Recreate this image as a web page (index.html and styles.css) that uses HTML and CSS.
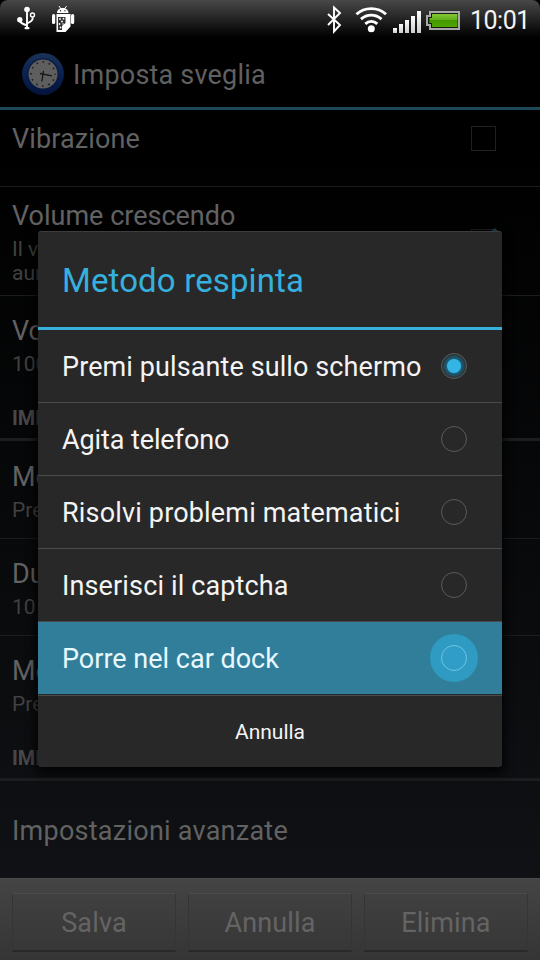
FILE: index.html
```html
<!DOCTYPE html>
<html lang="it">
<head>
<meta charset="utf-8">
<title>Imposta sveglia</title>
<link rel="stylesheet" href="styles.css">
</head>
<body>
<div class="screen">
  <header class="status">
    <svg class="status-left" width="90" height="38" viewBox="0 0 90 38">
      <g fill="none" stroke="#fff" stroke-width="1.900"><path d="M27 28V9M27 25.500c-5-2-7.500-3-7.500-6M27 23.500c4-2 5.800-3 5.800-6"/><circle cx="32.500" cy="15" r="2" stroke-width="1.400"/></g>
      <g fill="#fff"><circle cx="27" cy="9.500" r="2.800"/><circle cx="19.800" cy="19.800" r="2.700"/><rect x="24.500" y="27" width="5" height="2.200" rx="1"/></g>
      <g fill="#fff"><path d="M57 13c0-3.500 3-5 5.700-5s5.800 1.500 5.800 5zM56.500 14h14v12.500l-5 5.500h-9z"/><rect x="52" y="14" width="3.200" height="10" rx="1.500"/><rect x="71" y="14" width="3.200" height="10" rx="1.500"/></g>
      <path d="M59 6l2 3M66.500 6l-2 3" stroke="#fff"/>
      <path d="M58 17h7.500v6l-3.500 3v4h-4z" fill="#333"/>
      <g fill="#fff"><circle cx="60" cy="19" r=".9"/><circle cx="63.500" cy="18.700" r=".9"/><circle cx="62" cy="21.500" r=".9"/><circle cx="59.500" cy="24" r=".9"/><circle cx="63" cy="24" r=".8"/><circle cx="60.500" cy="27.500" r=".9"/></g>
      <circle cx="60.500" cy="10.800" r=".7" fill="#222"/><circle cx="65" cy="10.800" r=".7" fill="#222"/>
    </svg>
    <svg class="status-right" width="140" height="38" viewBox="322 0 140 38">
      <defs><linearGradient id="gr" x2="0" y2="1"><stop stop-color="#84c832"/><stop offset=".45" stop-color="#62b01c"/><stop offset=".5" stop-color="#439900"/><stop offset="1" stop-color="#4fa600"/></linearGradient>
      <linearGradient id="bar" x2="0" y2="1"><stop stop-color="#fff"/><stop offset="1" stop-color="#ccc"/></linearGradient></defs>
      <path d="M328 14l12 11-6 6.500V7.500l6 5.500-12 12" fill="none" stroke="#fff" stroke-width="1.900"/>
      <g fill="none" stroke="#fff" stroke-width="2.900"><path d="M356.500 14.200c8-7.500 21.500-7.500 29.500 0M361 19.200c6-5.400 14.500-5.400 20.500 0M365.300 23.800c3.600-3.200 8.400-3.200 12 0"/></g>
      <circle cx="371.300" cy="28.700" r="3.500" fill="#fff"/>
      <g fill="url(#bar)"><rect x="393" y="28" width="4" height="5"/><rect x="399" y="24" width="4" height="9"/><rect x="405" y="20" width="4" height="13"/><rect x="411" y="16" width="4" height="17"/><rect x="417" y="11" width="4" height="22"/></g>
      <path d="M430 12h29v17h-29v-4h-3v-9h3z" fill="#171c10" stroke="#a8a8a8" stroke-width="2"/>
      <path d="M432 14h25.500v13H432v-4h-2.500v-5h2.500z" fill="url(#gr)"/>
    </svg>
    <span class="clock">10:01</span>
  </header>
  <div class="bar">
    <svg width="46" height="46" viewBox="0 0 46 46">
      <defs><linearGradient id="blue" x2="0" y2="1"><stop stop-color="#1b3257"/><stop offset=".5" stop-color="#0b2150"/><stop offset="1" stop-color="#03133d"/></linearGradient></defs>
      <circle cx="23" cy="23" r="21" fill="url(#blue)"/><circle cx="23" cy="23" r="15.800" fill="#081a42"/><circle cx="23" cy="23" r="14.500" fill="#5e5e5e"/>
      <circle cx="23" cy="23" r="12" fill="none" stroke="#1c1c1c" stroke-width="1.600" stroke-dasharray="1.600 4.683" stroke-dashoffset=".8"/>
      <path d="M20 22.500l12 2.300M23.500 20l-1.700 10.500" stroke="#151515" stroke-width="1.300"/>
    </svg>
    <h1>Imposta sveglia</h1>
  </div>
  <main class="list">
    <div class="row vib"><div class="name t1">Vibrazione</div><i class="check"></i></div>
    <div class="row vol"><div><div class="name t2">Volume crescendo</div><div class="sub">Il v<br>aum</div></div><i class="check on"><svg width="14" height="14" viewBox="0 0 14 14"><path d="M1 8l7-5 5 5-6 6z" fill="#1d4656"/></svg></i></div>
    <div class="row first last"><div><div class="name">Vol</div><div class="sub">100</div></div></div>
    <div class="section">IMP</div>
    <div class="row method"><div><div class="name">Met</div><div class="sub">Pre</div></div></div>
    <div class="row after"><div><div class="name">Dur</div><div class="sub">10</div></div></div>
    <div class="row after last"><div><div class="name">Met</div><div class="sub">Pre</div></div></div>
    <div class="section">IMP</div>
    <div class="row adv"><div class="name t3">Impostazioni avanzate</div></div>
  </main>
  <footer class="foot">
    <div class="btn">Salva</div><div class="btn">Annulla</div><div class="btn">Elimina</div>
  </footer>
  <section class="dialog">
    <h2>Metodo respinta</h2>
    <div class="opt"><span class="o1">Premi pulsante sullo schermo</span><i class="radio sel"></i></div>
    <div class="opt"><span class="o2">Agita telefono</span><i class="radio"></i></div>
    <div class="opt"><span class="o3">Risolvi problemi matematici</span><i class="radio"></i></div>
    <div class="opt"><span class="o4">Inserisci il captcha</span><i class="radio"></i></div>
    <div class="opt pressed"><span class="o5">Porre nel car dock</span><i class="radio"></i></div>
    <div class="cancel">Annulla</div>
  </section>
</div>
</body>
</html>
```
FILE: styles.css
```css
* { box-sizing: border-box; }
body { margin: 0; background: #000; font-family: Roboto, "Liberation Sans", sans-serif; }
.screen { position: relative; width: 540px; height: 960px; overflow: hidden; display: flex; flex-direction: column; background: linear-gradient(#000 0, #000 150px, #0f1114 870px); }
.status { height: 38px; flex: none; display: flex; align-items: center; background: linear-gradient(#484848, #292929 16px, #111 28px, #000 38px); border-radius: 8px 8px 0 0; }
.status svg { flex: none; display: block; }
.status-right { margin-left: 232px; }
.clock { color: #f4f4f4; font-size: 25px; line-height: 38px; margin: 3px 0 0 8px; letter-spacing: -.5px; white-space: nowrap; }
.bar { height: 72px; flex: none; display: flex; align-items: center; padding-left: 20px; border-bottom: 3px solid #1d4857; background: #000; }
.bar svg { flex: none; margin-top: 2px; }
h1 { margin: 4px 0 0 7px; font-size: 27px; line-height: 32px; font-weight: 400; color: #606060; white-space: nowrap; letter-spacing: .2px; }
.list { flex: none; height: 768px; }
.row { height: 97px; padding: 20px 44px 0 12px; border-bottom: 1px solid #1c1c1e; display: flex; justify-content: space-between; align-items: flex-start; color: #626262; }
.row.vib { height: 77px; padding-top: 13px; }
.row.vol { height: 109px; padding-top: 13px; }
.row.last { border: 0; }
.row.first { padding-top: 19px; }
.row.method { height: 98px; }
.row.after { padding-top: 19px; }
.row.adv { border: 0; padding-top: 34px; }
.name { font-size: 27px; line-height: 32px; white-space: nowrap; }
.t1 { letter-spacing: .12px; }
.t3 { letter-spacing: .25px; }
.sub { font-size: 21px; line-height: 24px; margin-top: 5px; color: #414141; }
.section { height: 48px; padding: 13px 12px 0; font-size: 20px; line-height: 24px; font-weight: 700; color: #484848; border-bottom: 3px solid #1c1d1f; }
.check { width: 25px; height: 25px; border: 1px solid #202020; margin: 3px 0 0; }
.check.on { margin-top: 29px; position: relative; }
.check.on svg { position: absolute; right: -6px; top: -5px; }
.foot { height: 82px; flex: none; display: flex; gap: 12px; padding: 14px 12px 9px; background: linear-gradient(#444, #353535); border-top: 1px solid #4b4b4b; }
.btn { width: 164px; height: 59px; text-align: center; font-size: 27px; line-height: 58px; color: #646464; background: linear-gradient(#404040, #373737); border: 1px solid #353535; border-top-color: #4b4b4b; border-bottom: 2px solid #292929; letter-spacing: .15px; }
.dialog { position: absolute; left: 38px; top: 231px; width: 464px; height: 536px; border-radius: 3px; background: #282828; border-top: 1px solid #3d3d3d; box-shadow: 0 4px 10px 3px rgba(0,0,0,.75); overflow: hidden; }
h2 { height: 98px; margin: 0; padding: 29px 24px 0; border-bottom: 3px solid #37b0dc; font-size: 33px; line-height: 40px; font-weight: 400; color: #36b0de; white-space: nowrap; letter-spacing: .13px; }
.opt { height: 73px; padding: 0 34px 0 24px; display: flex; align-items: center; justify-content: space-between; border-bottom: 1px solid #4b4b4b; color: #f4f4f4; font-size: 27px; line-height: 32px; white-space: nowrap; }
.opt span { padding-top: 2px; }
.o1 { letter-spacing: .1px; }
.o2 { letter-spacing: -.1px; }
.o3 { letter-spacing: .17px; }
.o4 { letter-spacing: .14px; }
.radio { width: 26px; height: 26px; flex: none; border: 1px solid #5a5a5a; border-radius: 50%; margin: 0 1px 1px 0; }
.radio.sel { background: radial-gradient(circle, #34b5e5 0, #34b5e5 6.500px, #16607c 7.500px, #264c59 9.500px, #293135 12px); }
.pressed { height: 74px; background: #307e9a; box-shadow: inset 0 -1px #202a2d; color: #e8f8ff; }
.pressed span { padding: 0; }
.pressed .radio { border-color: #70c4e2; background: #2f9dc8; box-shadow: 0 0 0 11px #2f9bc3; margin-bottom: 2px; }
.cancel { height: 71px; color: #f4f4f4; text-align: center; font-size: 21px; line-height: 73px; }
```
